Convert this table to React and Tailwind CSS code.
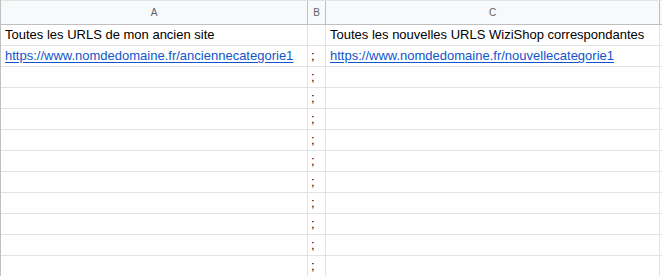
const rows = [
  ['Toutes les URLS de mon ancien site', '', 'Toutes les nouvelles URLS WiziShop correspondantes'],
  ['https://www.nomdedomaine.fr/anciennecategorie1', ';', 'https://www.nomdedomaine.fr/nouvellecategorie1'],
  ...Array.from({ length: 10 }, () => ['', ';', '']),
];

const isUrl = (v) => v.startsWith('http');

const Cell = ({ value, className = '' }) => (
  <div className={`h-full border-r border-[#e2e3e3] flex items-end pb-[3px] px-[4px] overflow-hidden whitespace-nowrap ${className}`}>
    {isUrl(value) ? (
      <span className="text-[#1155cc] underline underline-offset-[2px]">{value}</span>
    ) : (
      <span className="text-black">{value}</span>
    )}
  </div>
);

export default function App() {
  return (
    <div className="w-[662px] h-[276px] overflow-hidden bg-white text-[13px] leading-[15px] border-l border-[#c0c0c0]" style={{ fontFamily: '"Liberation Sans", Arial, sans-serif' }}>
      <div className="grid grid-cols-[307px_18px_334px] h-[25px] bg-[#f8f9fa] border-t border-[#e2e3e3] border-b border-b-[#c0c0c0] text-[10px] text-[#5f6368]">
        <div className="border-r border-[#c0c0c0] flex items-center justify-center">A</div>
        <div className="border-r border-[#c0c0c0] flex items-center justify-center">B</div>
        <div className="border-r border-[#c0c0c0] flex items-center justify-center">C</div>
      </div>
      {rows.map((r, i) => (
        <div key={i} className="grid grid-cols-[307px_18px_334px] h-[21px] border-b border-[#e2e3e3]">
          <Cell value={r[0]} />
          <Cell value={r[1]} className="pl-[3px]" />
          <Cell value={r[2]} />
        </div>
      ))}
    </div>
  );
}
